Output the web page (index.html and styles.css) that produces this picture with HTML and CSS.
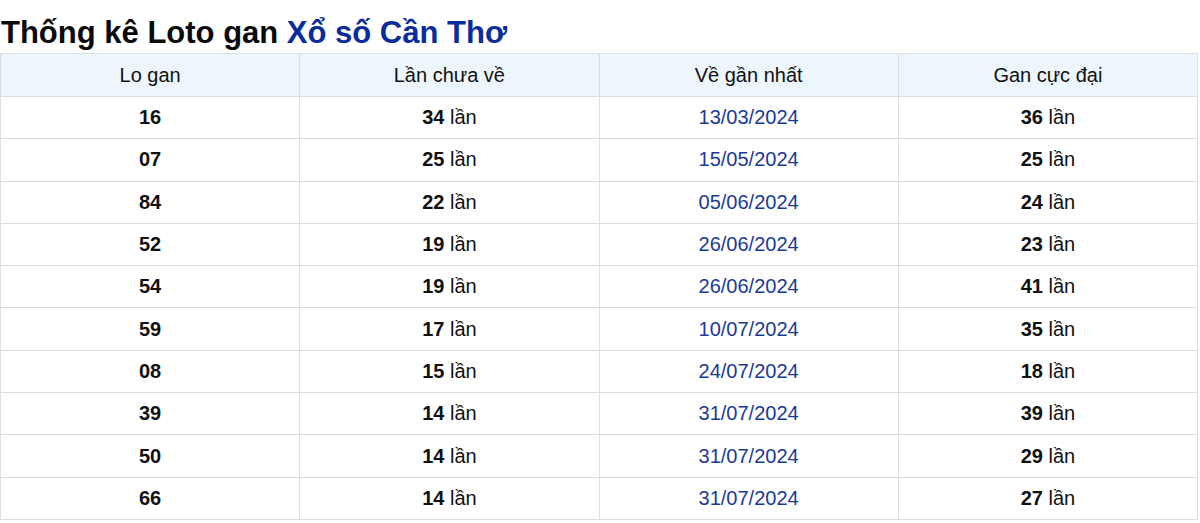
FILE: index.html
```html
<!DOCTYPE html>
<html lang="vi">
<head>
<meta charset="utf-8">
<link rel="stylesheet" href="styles.css">
</head>
<body>
<h2 class="title">Thống kê Loto gan <span class="hl">Xổ số Cần Thơ</span></h2>
<table class="gan">
<thead>
<tr><th>Lo gan</th><th>Lần chưa về</th><th>Về gần nhất</th><th>Gan cực đại</th></tr>
</thead>
<tbody>
<tr><td><b>16</b></td><td><b>34</b> lần</td><td class="date">13/03/2024</td><td><b>36</b> lần</td></tr>
<tr><td><b>07</b></td><td><b>25</b> lần</td><td class="date">15/05/2024</td><td><b>25</b> lần</td></tr>
<tr><td><b>84</b></td><td><b>22</b> lần</td><td class="date">05/06/2024</td><td><b>24</b> lần</td></tr>
<tr><td><b>52</b></td><td><b>19</b> lần</td><td class="date">26/06/2024</td><td><b>23</b> lần</td></tr>
<tr><td><b>54</b></td><td><b>19</b> lần</td><td class="date">26/06/2024</td><td><b>41</b> lần</td></tr>
<tr><td><b>59</b></td><td><b>17</b> lần</td><td class="date">10/07/2024</td><td><b>35</b> lần</td></tr>
<tr><td><b>08</b></td><td><b>15</b> lần</td><td class="date">24/07/2024</td><td><b>18</b> lần</td></tr>
<tr><td><b>39</b></td><td><b>14</b> lần</td><td class="date">31/07/2024</td><td><b>39</b> lần</td></tr>
<tr><td><b>50</b></td><td><b>14</b> lần</td><td class="date">31/07/2024</td><td><b>29</b> lần</td></tr>
<tr><td><b>66</b></td><td><b>14</b> lần</td><td class="date">31/07/2024</td><td><b>27</b> lần</td></tr>
</tbody>
</table>
</body>
</html>
```
FILE: styles.css
```css
html, body {
  margin: 0;
  padding: 0;
  background: #fff;
  font-family: "Liberation Sans", Arial, sans-serif;
  color: #111;
}
.title {
  margin: 0;
  padding: 15px 0 0 1px;
  height: 51px;
  box-sizing: border-box;
  font-size: 31px;
  line-height: 36px;
  font-weight: bold;
  color: #0a0a0a;
  white-space: nowrap;
}
.title .hl {
  color: #0b2c9c;
}
.gan {
  width: 1198px;
  border-collapse: collapse;
  table-layout: fixed;
  margin-top: 2px;
}
.gan th, .gan td {
  border: 1px solid #dedede;
  text-align: center;
  font-size: 20px;
  height: 42.3px;
  padding: 0;
  box-sizing: border-box;
  vertical-align: middle;
}
.gan th {
  background: #eef6fd;
  font-weight: normal;
  height: 43px;
}
.gan td.date {
  color: #1b3a94;
}
```
